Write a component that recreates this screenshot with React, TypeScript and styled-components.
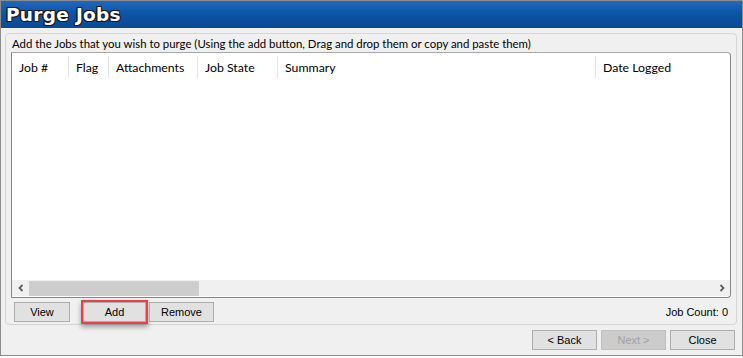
import React from "react";
import styled, { createGlobalStyle } from "styled-components";

const GlobalStyle = createGlobalStyle`
  html, body {
    margin: 0;
    padding: 0;
    background: #ffffff;
  }
  * {
    box-sizing: border-box;
  }
`;

const Window = styled.div`
  width: 743px;
  height: 356px;
  border: 1px solid #8c8c8c;
  background: #f0f0f0;
  display: flex;
  flex-direction: column;
`;

const TitleBar = styled.div`
  height: 27px;
  flex: none;
  background: linear-gradient(#1f68bd 0%, #0d55a6 45%, #0a4a93 100%);
  display: flex;
  align-items: center;
  padding-left: 5px;
`;

const Title = styled.h1`
  margin: 0;
  font-family: "DejaVu Sans", "Liberation Sans", sans-serif;
  font-weight: bold;
  font-size: 18.5px;
  letter-spacing: 0.3px;
  color: #ffffff;
  text-shadow: -1px -1px 0 #1a1a1a, 1px -1px 0 #1a1a1a, -1px 1px 0 #1a1a1a,
    1px 1px 0 #1a1a1a, 0 1px 0 #1a1a1a, 1px 0 0 #1a1a1a, 0 -1px 0 #1a1a1a,
    -1px 0 0 #1a1a1a;
`;

const Body = styled.div`
  flex: 1;
  display: flex;
  flex-direction: column;
  padding: 5px 5px 0 4px;
`;

const GroupBox = styled.div`
  border: 1px solid #d5d5d5;
  border-radius: 4px;
  padding: 3px 5px 2px 5px;
  display: flex;
  flex-direction: column;
`;

const Caption = styled.div`
  font-family: Lato, "Noto Sans", sans-serif;
  font-size: 11.4px;
  line-height: 14px;
  color: #000;
  padding-left: 1px;
  white-space: nowrap;
`;

const ListView = styled.div`
  margin-top: 1px;
  height: 246px;
  background: #ffffff;
  border: 1px solid #868686;
  border-top-color: #a8a8a8;
  border-radius: 0 4px 4px 0;
  display: flex;
  flex-direction: column;
  overflow: hidden;
`;

const Header = styled.div`
  height: 28px;
  display: flex;
  align-items: center;
`;

const HeaderCell = styled.div<{ $w: number }>`
  width: ${(p) => p.$w}px;
  flex: none;
  height: 22px;
  display: flex;
  align-items: center;
  padding-left: 7px;
  border-right: 1px solid #e5e5e5;
  font-family: Lato, "Noto Sans", sans-serif;
  font-size: 12.3px;
  color: #000;
  white-space: nowrap;
  &:last-child {
    border-right: none;
    flex: 1;
  }
`;

const Rows = styled.div`
  flex: 1;
`;

const ScrollBar = styled.div`
  height: 16px;
  background: #f0f0f0;
  display: flex;
  align-items: center;
  margin-bottom: 1px;
`;

const Arrow = styled.div`
  width: 17px;
  height: 16px;
  flex: none;
  display: flex;
  align-items: center;
  justify-content: center;
`;

const Track = styled.div`
  flex: 1;
  height: 16px;
  display: flex;
  align-items: center;
`;

const Thumb = styled.div`
  height: 15px;
  background: #cdcdcd;
`;

const ActionRow = styled.div`
  margin-top: 4px;
  height: 20px;
  display: flex;
  align-items: center;
  padding-left: 3px;
`;

const Button = styled.button<{ $w: number; $disabled?: boolean }>`
  width: ${(p) => p.$w}px;
  height: 20px;
  padding: 0;
  border: 1px solid ${(p) => (p.$disabled ? "#bfbfbf" : "#adadad")};
  background: ${(p) => (p.$disabled ? "#cccccc" : "#e1e1e1")};
  color: ${(p) => (p.$disabled ? "#a0a0a0" : "#000")};
  font-family: "Liberation Sans", Arial, sans-serif;
  font-size: 11px;
  display: flex;
  align-items: center;
  justify-content: center;
`;

const Highlight = styled.div`
  margin: -2px 1px -2px 11px;
  border: 2px solid #e8414a;
  box-shadow: 0 3px 5px rgba(0, 0, 0, 0.35);
  display: flex;
`;

const Count = styled.div`
  margin-left: auto;
  padding-right: 3px;
  font-family: "Liberation Sans", Arial, sans-serif;
  font-size: 11px;
  color: #000;
`;

const Footer = styled.div`
  margin-top: 5px;
  display: flex;
  justify-content: flex-end;
  gap: 4px;
  padding-right: 2px;
`;

const columns: [string, number][] = [
  ["Job #", 57],
  ["Flag", 40],
  ["Attachments", 89],
  ["Job State", 80],
  ["Summary", 318],
  ["Date Logged", 0],
];

function Chevron({ dir }: { dir: "left" | "right" }) {
  return (
    <svg width="8" height="8" viewBox="0 0 8 8">
      <path
        d={dir === "left" ? "M5.5 1 L2.5 4 L5.5 7" : "M2.5 1 L5.5 4 L2.5 7"}
        fill="none"
        stroke="#606060"
        strokeWidth="1.8"
      />
    </svg>
  );
}

export default function App() {
  return (
    <>
      <GlobalStyle />
      <Window>
        <TitleBar>
          <Title>Purge Jobs</Title>
        </TitleBar>
        <Body>
          <GroupBox>
            <Caption>
              Add the Jobs that you wish to purge (Using the add button, Drag and drop them or copy and paste them)
            </Caption>
            <ListView>
              <Header>
                {columns.map(([name, w]) => (
                  <HeaderCell key={name} $w={w}>
                    {name}
                  </HeaderCell>
                ))}
              </Header>
              <Rows />
              <ScrollBar>
                <Arrow>
                  <Chevron dir="left" />
                </Arrow>
                <Track>
                  <Thumb style={{ width: "24.8%" }} />
                </Track>
                <Arrow>
                  <Chevron dir="right" />
                </Arrow>
              </ScrollBar>
            </ListView>
            <ActionRow>
              <Button $w={56}>View</Button>
              <Highlight>
                <Button $w={63}>Add</Button>
              </Highlight>
              <Button $w={65}>Remove</Button>
              <Count>Job Count: 0</Count>
            </ActionRow>
          </GroupBox>
          <Footer>
            <Button $w={65}>&lt; Back</Button>
            <Button $w={65} $disabled>
              Next &gt;
            </Button>
            <Button $w={65}>Close</Button>
          </Footer>
        </Body>
      </Window>
    </>
  );
}
